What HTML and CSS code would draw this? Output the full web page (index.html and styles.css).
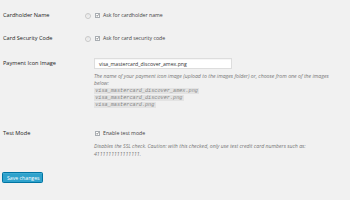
FILE: index.html
```html
<!DOCTYPE html>
<html>
<head>
<meta charset="utf-8">
<link rel="stylesheet" href="styles.css">
</head>
<body>
<div class="page">
  <div class="row">
    <div class="th">Cardholder Name</div>
    <div class="help"><span class="help-icon">?</span></div>
    <div class="td">
      <label class="check"><span class="box"><svg viewBox="0 0 10 10" width="5" height="5"><path d="M1.5 5 L4 7.5 L8.5 1.5" fill="none" stroke="#333" stroke-width="2"/></svg></span>Ask for cardholder name</label>
    </div>
  </div>
  <div class="row">
    <div class="th">Card Security Code</div>
    <div class="help"><span class="help-icon">?</span></div>
    <div class="td">
      <label class="check"><span class="box"><svg viewBox="0 0 10 10" width="5" height="5"><path d="M1.5 5 L4 7.5 L8.5 1.5" fill="none" stroke="#333" stroke-width="2"/></svg></span>Ask for card security code</label>
    </div>
  </div>
  <div class="row row-input">
    <div class="th th-input">Payment Icon Image</div>
    <div class="help"></div>
    <div class="td">
      <div class="input">visa_mastercard_discover_amex.png</div>
      <p class="desc">The name of your payment icon image (upload to the images folder) or, choose from one of the images below:</p>
      <div class="codes">
        <code>visa_mastercard_discover_amex.png</code>
        <code>visa_mastercard_discover.png</code>
        <code>visa_mastercard.png</code>
      </div>
    </div>
  </div>
  <div class="row row-test">
    <div class="th">Test Mode</div>
    <div class="help"></div>
    <div class="td">
      <label class="check"><span class="box"><svg viewBox="0 0 10 10" width="5" height="5"><path d="M1.5 5 L4 7.5 L8.5 1.5" fill="none" stroke="#333" stroke-width="2"/></svg></span>Enable test mode</label>
      <p class="desc desc-test">Disables the SSL check. Caution: with this checked, only use test credit card numbers such as: 4111111111111111.</p>
    </div>
  </div>
  <div class="submit"><button class="button">Save changes</button></div>
</div>
</body>
</html>
```
FILE: styles.css
```css
html, body {
  margin: 0;
  padding: 0;
  background: #f1f1f1;
}
body {
  font-family: "Open Sans", "Liberation Sans", sans-serif;
  font-size: 5.2px;
  color: #444;
}
.page {
  padding: 4px 6px 0 2px;
}
.row {
  display: grid;
  grid-template-columns: 80px 12px 1fr;
  padding: 8px 0;
}
.th {
  padding-left: 1px;
  font-size: 5.6px;
  font-weight: 500;
  color: #222;
  line-height: 7px;
}
.th-input {
  line-height: 11px;
}
.help {
  display: flex;
  justify-content: center;
  align-items: center;
  height: 7px;
}
.help-icon {
  width: 4px;
  height: 4px;
  border: 0.8px solid #c8c8c8;
  border-radius: 50%;
  font-size: 3px;
  line-height: 4px;
  text-align: center;
  color: #c8c8c8;
}
.td {
  line-height: 7px;
}
.check {
  display: flex;
  align-items: center;
  gap: 3px;
  padding-left: 1px;
}
.box {
  width: 5px;
  height: 5px;
  box-sizing: border-box;
  border: 0.6px solid #a8adb2;
  background: #fff;
  display: flex;
  align-items: center;
  justify-content: center;
}
.box svg {
  display: block;
}
.input {
  width: 138px;
  height: 11px;
  box-sizing: border-box;
  background: #fff;
  border: 0.5px solid #ddd;
  box-shadow: inset 0 0.5px 1px rgba(0,0,0,0.07);
  padding: 0 4px;
  line-height: 10px;
  color: #333;
}
.desc {
  margin: 3.5px 0 0;
  font-style: italic;
  color: #777;
}
.codes {
  margin-top: 1px;
  display: flex;
  flex-direction: column;
  align-items: flex-start;
  gap: 1px;
}
code {
  font-family: "Liberation Mono", monospace;
  font-style: italic;
  font-size: 5.2px;
  line-height: 6px;
  background: #e3e3e3;
  color: #888;
  padding: 0 1.2px;
}
.row-input {
  padding-bottom: 11px;
}
.row-test {
  padding-top: 11.5px;
}
.desc-test {
  margin-top: 5px;
  line-height: 8px;
  width: 240px;
}
.submit {
  padding-top: 6px;
}
.button {
  font-family: "Open Sans", "Liberation Sans", sans-serif;
  font-size: 5.2px;
  color: #fff;
  background: #2ea2cc;
  border: 0.5px solid #0074a2;
  border-radius: 1.5px;
  box-shadow: inset 0 0.5px 0 rgba(120,200,230,0.5);
  height: 11px;
  padding: 0 4px;
  width: 41px;
  line-height: 10px;
  white-space: nowrap;
  margin: 0;
}
```
